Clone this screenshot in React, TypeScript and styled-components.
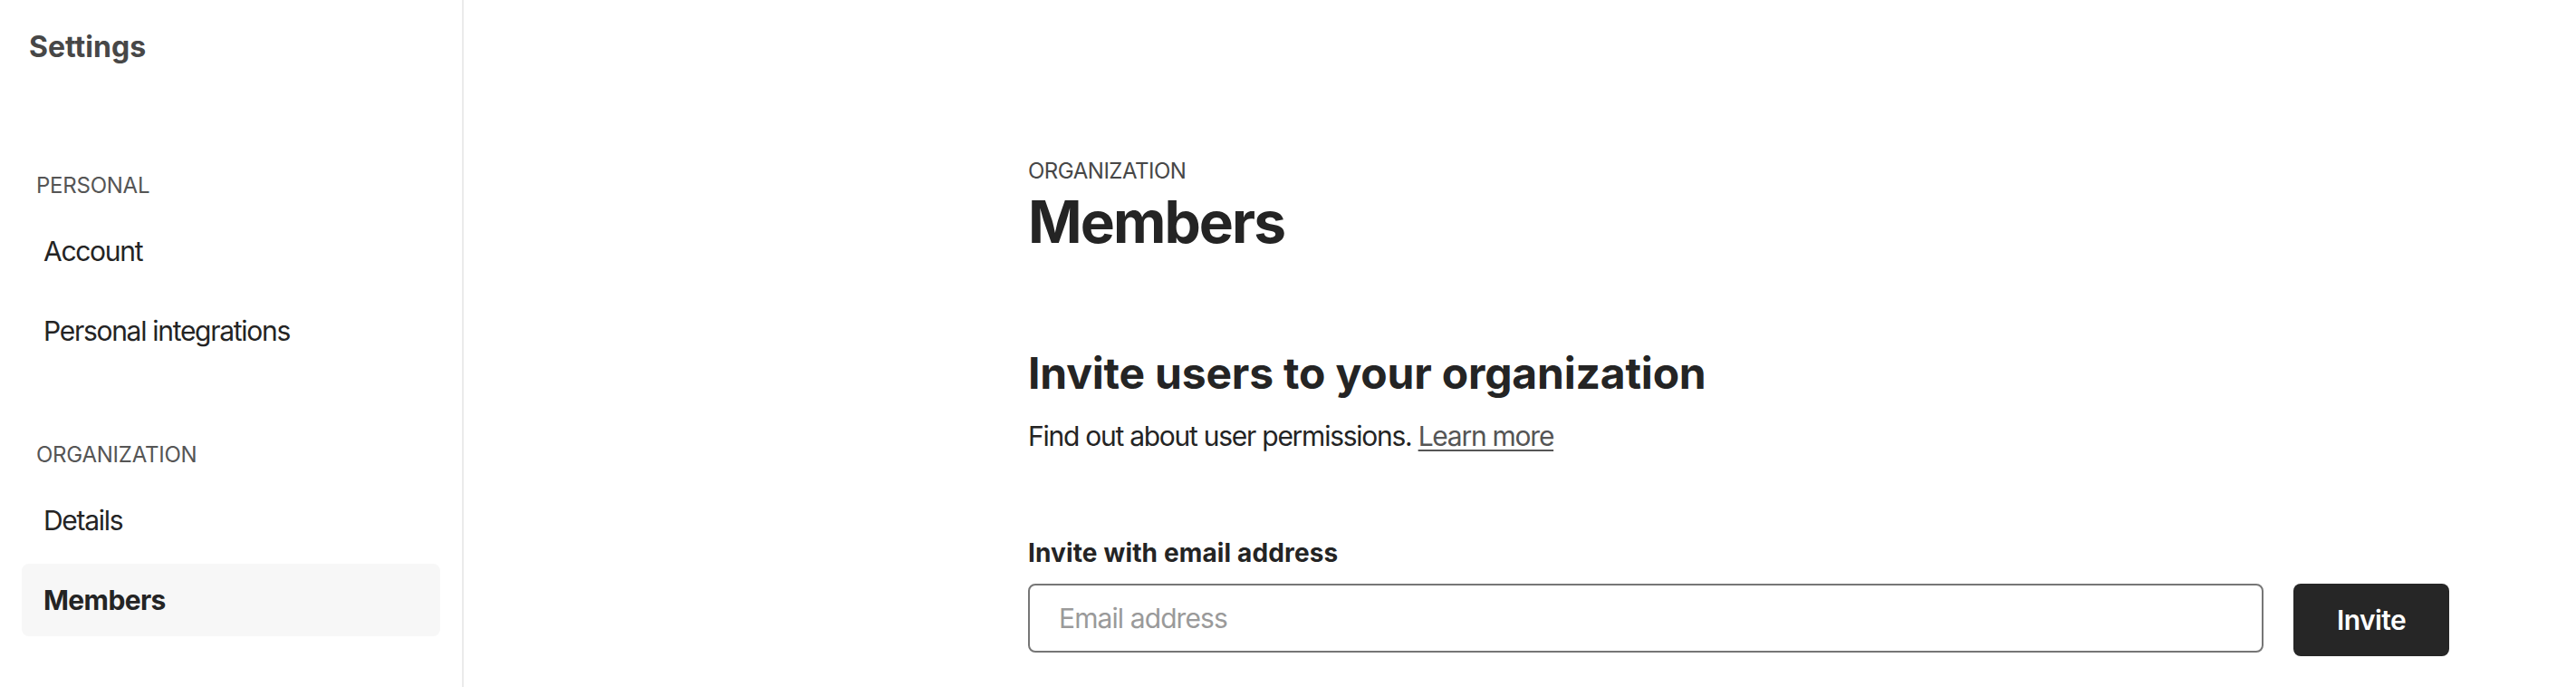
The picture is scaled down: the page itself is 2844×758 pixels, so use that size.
import React from 'react';
import styled, { createGlobalStyle } from 'styled-components';

const GlobalStyle = createGlobalStyle`
  * {
    box-sizing: border-box;
  }

  body {
    margin: 0;
    background: #ffffff;
    color: #242424;
    font-family: Inter, "Noto Sans", "Liberation Sans", sans-serif;
    -webkit-font-smoothing: antialiased;
  }
`;

const Layout = styled.div`
  display: flex;
  min-height: 100vh;
`;

const Sidebar = styled.aside`
  flex: 0 0 512px;
  display: flex;
  flex-direction: column;
  padding-top: 32px;
  border-right: 2px solid #ebebeb;
`;

const SidebarTitle = styled.h2`
  margin: 0;
  padding-left: 32px;
  font-size: 32px;
  line-height: 40px;
  font-weight: 700;
  color: #474747;
`;

const NavGroups = styled.nav`
  display: flex;
  flex-direction: column;
  gap: 81px;
  margin-top: 117px;
`;

const NavGroup = styled.div`
  display: flex;
  flex-direction: column;
  gap: 16px;
`;

const GroupLabel = styled.div`
  padding-left: 40px;
  font-size: 24px;
  line-height: 32px;
  letter-spacing: -0.01em;
  text-transform: uppercase;
  color: #555555;
`;

const NavList = styled.ul`
  list-style: none;
  margin: 0;
  padding: 0 24px;
  display: flex;
  flex-direction: column;
  gap: 8px;
`;

const NavItem = styled.li<{ $active?: boolean }>`
  display: flex;
  align-items: center;
  height: 80px;
  padding: 0 24px;
  border-radius: 8px;
  font-size: 30px;
  letter-spacing: ${(p) => (p.$active ? '-0.02em' : '-0.043em')};
  font-weight: ${(p) => (p.$active ? 700 : 400)};
  color: #242424;
  background: ${(p) => (p.$active ? '#f7f7f7' : 'transparent')};
  cursor: pointer;
`;

const Main = styled.main`
  flex: 1;
  padding: 173px 0 0 623px;
`;

const Content = styled.div`
  width: 1569px;
  display: flex;
  flex-direction: column;
`;

const Eyebrow = styled.div`
  font-size: 24px;
  line-height: 32px;
  letter-spacing: -0.02em;
  color: #474747;
`;

const PageTitle = styled.h1`
  margin: 4px 0 0;
  font-size: 64px;
  line-height: 72px;
  font-weight: 700;
  letter-spacing: -0.03em;
  color: #242424;
`;

const SectionTitle = styled.h2`
  margin: 101px 0 0;
  font-size: 48px;
  line-height: 60px;
  font-weight: 700;
  letter-spacing: -0.004em;
  color: #242424;
`;

const SectionText = styled.p`
  margin: 19px 0 0;
  font-size: 30px;
  line-height: 40px;
  letter-spacing: -0.042em;
  color: #242424;
`;

const TextLink = styled.a`
  color: #555555;
  text-decoration: underline;
  text-underline-offset: 4px;
  text-decoration-thickness: 2px;
`;

const FieldLabel = styled.label`
  margin-top: 91px;
  font-size: 28px;
  line-height: 36px;
  font-weight: 700;
  letter-spacing: 0.005em;
  color: #242424;
`;

const InviteRow = styled.div`
  display: flex;
  align-items: flex-start;
  gap: 33px;
  margin-top: 16px;
`;

const EmailInput = styled.input`
  flex: 1;
  height: 76px;
  padding: 0 32px;
  border: 2px solid #767676;
  border-radius: 8px;
  font-family: inherit;
  font-size: 30px;
  letter-spacing: -0.03em;
  color: #242424;
  outline: none;

  &::placeholder {
    color: #9a9a9a;
  }
`;

const InviteButton = styled.button`
  flex: 0 0 172px;
  height: 80px;
  border: none;
  border-radius: 8px;
  background: #262626;
  color: #ffffff;
  font-family: inherit;
  font-size: 30px;
  font-weight: 600;
  letter-spacing: -0.02em;
  cursor: pointer;
`;

const personalLinks = ['Account', 'Personal integrations'];
const organizationLinks = ['Details', 'Members'];

const App: React.FC = () => {
  return (
    <Layout>
      <GlobalStyle />
      <Sidebar>
        <SidebarTitle>Settings</SidebarTitle>
        <NavGroups>
          <NavGroup>
            <GroupLabel>Personal</GroupLabel>
            <NavList>
              {personalLinks.map((link) => (
                <NavItem key={link}>{link}</NavItem>
              ))}
            </NavList>
          </NavGroup>
          <NavGroup>
            <GroupLabel>Organization</GroupLabel>
            <NavList>
              {organizationLinks.map((link) => (
                <NavItem key={link} $active={link === 'Members'}>
                  {link}
                </NavItem>
              ))}
            </NavList>
          </NavGroup>
        </NavGroups>
      </Sidebar>
      <Main>
        <Content>
          <Eyebrow>ORGANIZATION</Eyebrow>
          <PageTitle>Members</PageTitle>
          <SectionTitle>Invite users to your organization</SectionTitle>
          <SectionText>
            Find out about user permissions. <TextLink href="#">Learn more</TextLink>
          </SectionText>
          <FieldLabel htmlFor="invite-email">Invite with email address</FieldLabel>
          <InviteRow>
            <EmailInput id="invite-email" type="email" placeholder="Email address" />
            <InviteButton type="button">Invite</InviteButton>
          </InviteRow>
        </Content>
      </Main>
    </Layout>
  );
};

export default App;
